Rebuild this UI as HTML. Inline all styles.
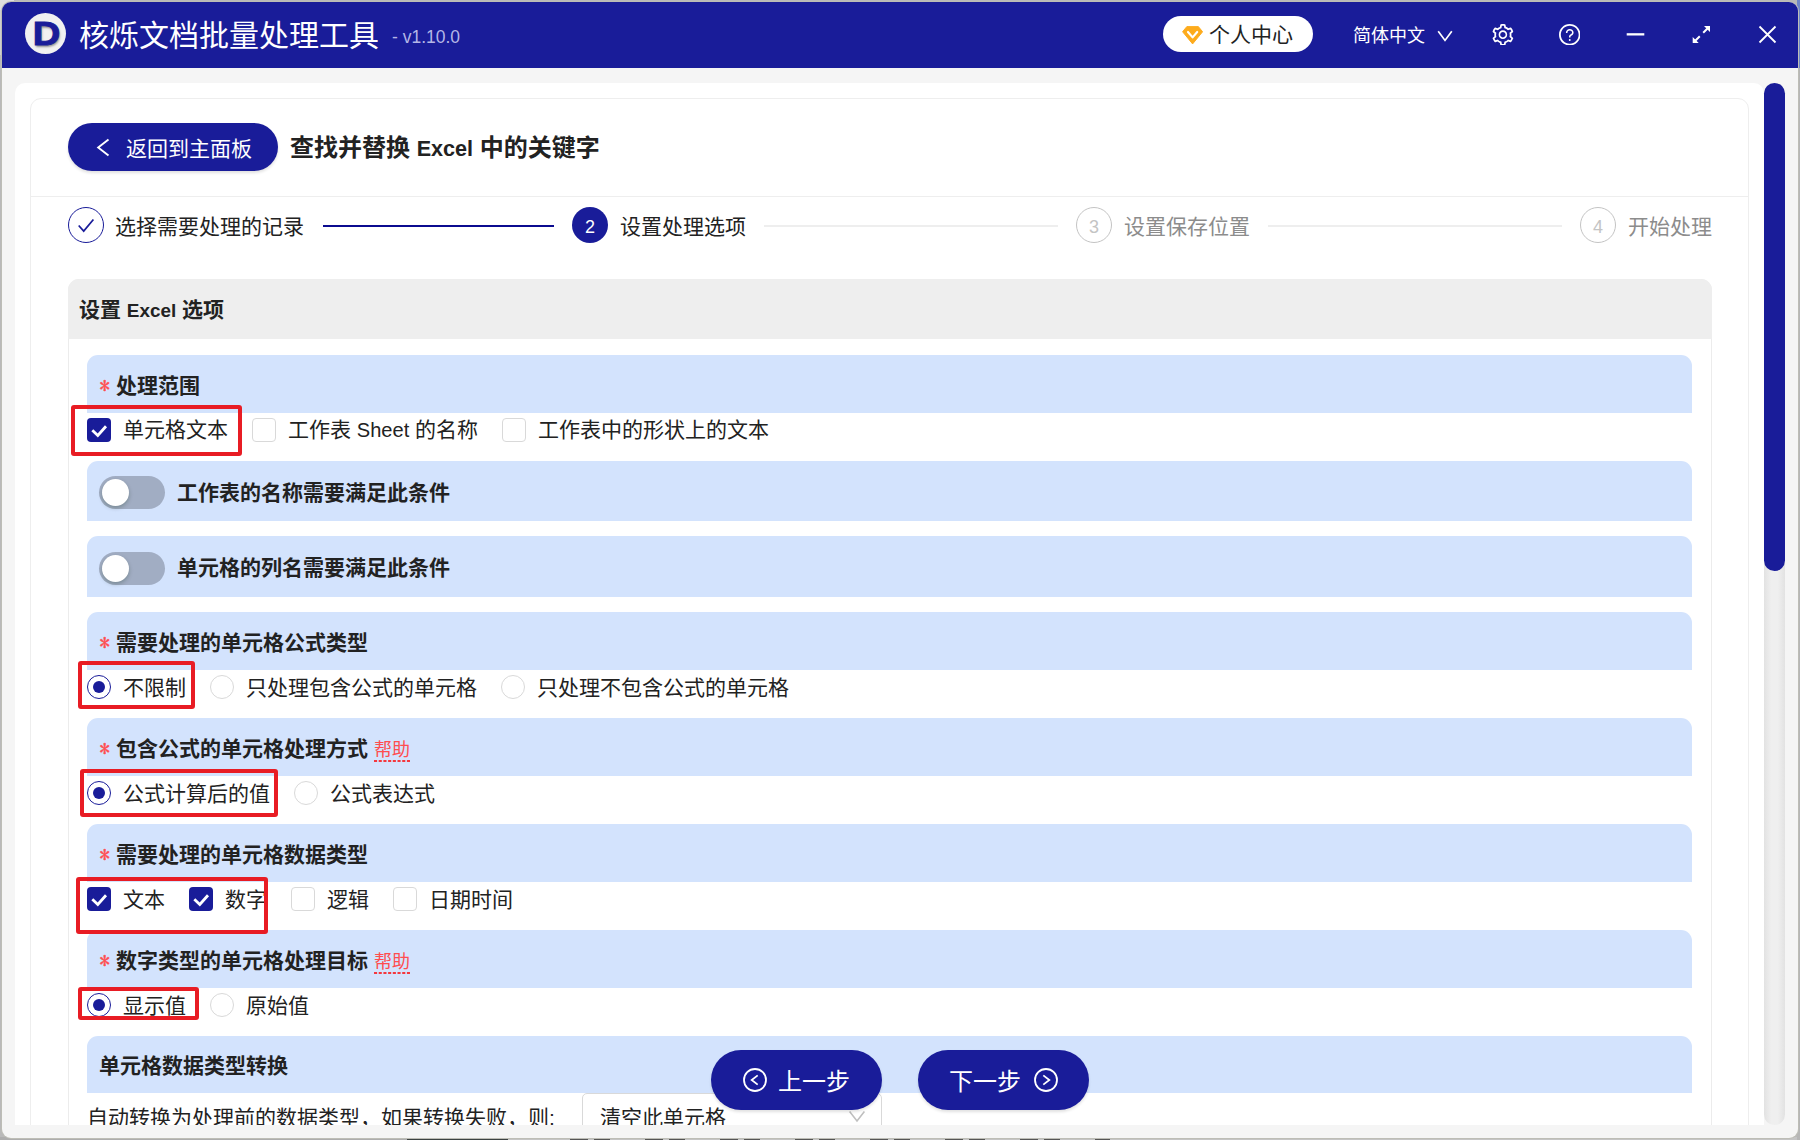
<!DOCTYPE html>
<html lang="zh-CN">
<head>
<meta charset="utf-8">
<title>核烁文档批量处理工具</title>
<style>
*{box-sizing:border-box;margin:0;padding:0}
html,body{width:1800px;height:1140px;overflow:hidden}
body{position:relative;background:#b9b9b9;font-family:"Liberation Sans","Noto Sans CJK SC",sans-serif;color:#222;font-size:21px}
.abs{position:absolute}
.t{position:absolute;white-space:nowrap;line-height:30px;height:30px}
.en{font-size:.9em}
.en2{font-size:.955em}
#win{position:absolute;left:2px;top:2px;width:1796px;height:1135.500px;background:#f5f5f5;border-radius:9px;overflow:hidden;box-shadow:0 0 0 1px #bdbdb6}
#bar{position:absolute;left:0;top:0;width:1796px;height:66px;background:#191c99}
.bb{position:absolute;left:87px;width:1605px;background:#d3e3fd;border-radius:11px 11px 0 0}
.lab{font-weight:bold;color:#222}
.star{position:absolute;color:#ff4d4f;font-size:21px;line-height:30px;font-family:"IPAGothic","DejaVu Sans",sans-serif;-webkit-text-stroke:.4px #ff4d4f}
.help{position:absolute;color:#ff4d4f;font-size:18px;line-height:24px;height:24px;white-space:nowrap}
.help svg{position:absolute;left:0;top:22.400px}
.cb{position:absolute;width:24px;height:24px;border:1px solid #d9d9d9;border-radius:4px;background:#fff}
.cb.on{border:0;background:#191c99}
.cb.on svg{position:absolute;left:0;top:0}
.rd{position:absolute;width:24px;height:24px;border:1px solid #d9d9d9;border-radius:50%;background:#fff}
.rd.on{border:1px solid #191c99}
.rd.on:after{content:"";position:absolute;left:50%;top:50%;width:12px;height:12px;margin:-6px 0 0 -6px;border-radius:50%;background:#191c99}
.red{position:absolute;border:4px solid #e81c24;border-radius:3px}
.sw{position:absolute;width:66px;height:33px;border-radius:17px;background:#a1adc3}
.sw:after{content:"";position:absolute;left:3px;top:3px;width:27px;height:27px;border-radius:50%;background:#fff;box-shadow:0 2px 4px rgba(0,35,11,.25)}
.btn{position:absolute;background:#191c99;color:#fff;border-radius:30px;box-shadow:0 2px 3px rgba(0,0,0,.12)}
</style>
</head>
<body>
<div id="desk">
<div class="abs" style="left:0;top:0;width:3px;height:55px;background:#cfcfcf"></div>
<div class="abs" style="left:0;top:0;width:14px;height:10px;background:#dedede"></div>
<div class="abs" style="left:0;top:1137px;width:407px;height:3px;background:#adadad"></div>
<div class="abs" style="left:407px;top:1137px;width:101px;height:3px;background:#3c4242"></div>
<div class="abs" style="left:508px;top:1137px;width:1292px;height:3px;background:#c4c4c4"></div>
<div class="abs" style="left:570px;top:1138px;width:540px;height:2px;background:repeating-linear-gradient(90deg,#555 0 18px,#c4c4c4 18px 24px,#555 24px 40px,#c4c4c4 40px 75px)"></div>
<div class="abs" style="left:1797px;top:0;width:3px;height:68px;background:#6f86c9"></div>
<div class="abs" style="left:1797px;top:68px;width:3px;height:1072px;background:#b6b6b6"></div>
</div>
<div id="win">
  <div id="bar"></div>
</div>
<div id="clip" class="abs" style="left:0;top:0;width:1800px;height:1125px;overflow:hidden">
  <div class="abs" style="left:15px;top:83px;width:1749px;height:1060px;background:#fff;border-radius:10px 10px 0 0"></div>
  <div class="abs" style="left:30px;top:98px;width:1719px;height:1100px;border:1px solid #eee;border-radius:11px"></div>
  <div class="abs" style="left:31px;top:196px;width:1717px;height:1px;background:#eee"></div>
  <!--HEADER-->
  <div class="btn" style="left:68px;top:123px;width:210px;height:48px;border-radius:24px"></div>
  <svg class="abs" style="left:95px;top:137px" width="16" height="21" viewBox="0 0 16 21"><path d="M13.500 2.600L3.200 10.500 13.500 18.400" fill="none" stroke="#fff" stroke-width="1.900"/></svg>
  <div class="t" style="left:126px;top:134px;font-size:21px;color:#fff">返回到主面板</div>
  <div class="t lab" style="left:290px;top:131px;height:34px;line-height:34px;font-size:24px">查找并替换 <span class="en">Excel</span> 中的关键字</div>
  <!--STEPS-->
  <div class="abs" style="left:68px;top:207px;width:36px;height:36px;border-radius:50%;border:1px solid #191c99;background:#fff"></div>
  <svg class="abs" style="left:76px;top:215px" width="20" height="20" viewBox="0 0 20 20"><path d="M2.700 10.500L7.700 16.100 17.400 4.500" fill="none" stroke="#191c99" stroke-width="1.700"/></svg>
  <div class="t" style="left:115px;top:212px;font-size:21px;color:#222">选择需要处理的记录</div>
  <div class="abs" style="left:323px;top:225px;width:231px;height:2px;background:#0b0b8f"></div>
  <div class="abs" style="left:572px;top:207px;width:36px;height:36px;border-radius:50%;background:#191c99;color:#fff;text-align:center;line-height:41px;font-size:18px;font-family:'Liberation Sans',sans-serif">2</div>
  <div class="t" style="left:620px;top:212px;font-size:21px;color:#222">设置处理选项</div>
  <div class="abs" style="left:764px;top:225px;width:294px;height:2px;background:#eee"></div>
  <div class="abs" style="left:1076px;top:207px;width:36px;height:36px;border-radius:50%;border:1px solid #c4c4c4;color:#c4c4c4;text-align:center;line-height:39px;font-size:18px;font-family:'Liberation Sans',sans-serif">3</div>
  <div class="t" style="left:1124px;top:212px;font-size:21px;color:#8c8c8c">设置保存位置</div>
  <div class="abs" style="left:1268px;top:225px;width:294px;height:2px;background:#eee"></div>
  <div class="abs" style="left:1580px;top:207px;width:36px;height:36px;border-radius:50%;border:1px solid #c4c4c4;color:#c4c4c4;text-align:center;line-height:39px;font-size:18px;font-family:'Liberation Sans',sans-serif">4</div>
  <div class="t" style="left:1628px;top:212px;font-size:21px;color:#8c8c8c">开始处理</div>
  <div class="abs" style="left:68px;top:279px;width:1644px;height:900px;border:1px solid #ececec;border-radius:11px 11px 0 0"></div>
  <div class="abs" style="left:68px;top:279px;width:1644px;height:60px;background:#eee;border-radius:11px 11px 0 0"></div>
  <div class="t lab" style="left:79px;top:295px;font-size:21px">设置 <span class="en">Excel</span> 选项</div>
  <!--FORM-->
  <div class="bb" style="top:355px;height:57.5px"></div>
  <div class="star" style="left:99.5px;top:371.5px">*</div>
  <div class="t lab" style="left:116px;top:371px">处理范围</div>
  <div class="cb on" style="left:87px;top:418px"><svg width="24" height="24" viewBox="0 0 24 24"><path d="M5.300 12.200L10.800 17.400 19 8.200" fill="none" stroke="#fff" stroke-width="2.800"/></svg></div>
  <div class="t" style="left:123px;top:415px">单元格文本</div>
  <div class="cb" style="left:252px;top:418px"></div>
  <div class="t" style="left:288px;top:415px">工作表 <span class="en2">Sheet</span> 的名称</div>
  <div class="cb" style="left:502px;top:418px"></div>
  <div class="t" style="left:538px;top:415px">工作表中的形状上的文本</div>
  <div class="bb" style="top:461px;height:60px"></div>
  <div class="sw" style="left:99px;top:476.0px"></div>
  <div class="t lab" style="left:177px;top:478px">工作表的名称需要满足此条件</div>
  <div class="bb" style="top:536px;height:60.5px"></div>
  <div class="sw" style="left:99px;top:551.5px"></div>
  <div class="t lab" style="left:177px;top:553px">单元格的列名需要满足此条件</div>
  <div class="bb" style="top:612px;height:57.5px"></div>
  <div class="star" style="left:99.5px;top:628.5px">*</div>
  <div class="t lab" style="left:116px;top:628px">需要处理的单元格公式类型</div>
  <div class="rd on" style="left:87px;top:675px"></div>
  <div class="t" style="left:123px;top:673px">不限制</div>
  <div class="rd" style="left:210px;top:675px"></div>
  <div class="t" style="left:246px;top:673px">只处理包含公式的单元格</div>
  <div class="rd" style="left:501px;top:675px"></div>
  <div class="t" style="left:537px;top:673px">只处理不包含公式的单元格</div>
  <div class="bb" style="top:718px;height:58px"></div>
  <div class="star" style="left:99.5px;top:734.5px">*</div>
  <div class="t lab" style="left:116px;top:734px">包含公式的单元格处理方式</div>
  <div class="help" style="left:374px;top:738px">帮助<svg width="36" height="3" viewBox="0 0 36 3"><path d="M0 1H36" stroke="#ff0000" stroke-width="1.300" stroke-dasharray="3.100 1.600" fill="none"/></svg></div>
  <div class="rd on" style="left:87px;top:781px"></div>
  <div class="t" style="left:123px;top:779px">公式计算后的值</div>
  <div class="rd" style="left:294px;top:781px"></div>
  <div class="t" style="left:330px;top:779px">公式表达式</div>
  <div class="bb" style="top:824px;height:58px"></div>
  <div class="star" style="left:99.5px;top:840.5px">*</div>
  <div class="t lab" style="left:116px;top:840px">需要处理的单元格数据类型</div>
  <div class="cb on" style="left:87px;top:887px"><svg width="24" height="24" viewBox="0 0 24 24"><path d="M5.300 12.200L10.800 17.400 19 8.200" fill="none" stroke="#fff" stroke-width="2.800"/></svg></div>
  <div class="t" style="left:123px;top:885px">文本</div>
  <div class="cb on" style="left:189px;top:887px"><svg width="24" height="24" viewBox="0 0 24 24"><path d="M5.300 12.200L10.800 17.400 19 8.200" fill="none" stroke="#fff" stroke-width="2.800"/></svg></div>
  <div class="t" style="left:225px;top:885px">数字</div>
  <div class="cb" style="left:291px;top:887px"></div>
  <div class="t" style="left:327px;top:885px">逻辑</div>
  <div class="cb" style="left:393px;top:887px"></div>
  <div class="t" style="left:429px;top:885px">日期时间</div>
  <div class="bb" style="top:930px;height:57.5px"></div>
  <div class="star" style="left:99.5px;top:946.5px">*</div>
  <div class="t lab" style="left:116px;top:946px">数字类型的单元格处理目标</div>
  <div class="help" style="left:374px;top:950px">帮助<svg width="36" height="3" viewBox="0 0 36 3"><path d="M0 1H36" stroke="#ff0000" stroke-width="1.300" stroke-dasharray="3.100 1.600" fill="none"/></svg></div>
  <div class="rd on" style="left:87px;top:993px"></div>
  <div class="t" style="left:123px;top:991px">显示值</div>
  <div class="rd" style="left:210px;top:993px"></div>
  <div class="t" style="left:246px;top:991px">原始值</div>
  <div class="bb" style="top:1036px;height:56.5px"></div>
  <div class="t lab" style="left:99px;top:1051px">单元格数据类型转换</div>
  <div class="t" style="left:87px;top:1103px">自动转换为处理前的数据类型，如果转换失败，则:</div>
  <div class="abs" style="left:582px;top:1093px;width:300px;height:48px;border:1px solid #d9d9d9;border-radius:5px;background:#fff"></div>
  <div class="t" style="left:600px;top:1103px">清空此单元格</div>
  <svg class="abs" style="left:848px;top:1110px" width="18" height="14" viewBox="0 0 18 14"><path d="M1.600 1.600L9 11 16.400 1.600" fill="none" stroke="#bfbfbf" stroke-width="1.600"/></svg>
  <div class="red" style="left:71px;top:405px;width:171px;height:51px"></div>
  <div class="red" style="left:78px;top:661px;width:117px;height:48px"></div>
  <div class="red" style="left:80px;top:769px;width:198px;height:48px"></div>
  <div class="red" style="left:76px;top:877px;width:192px;height:57px"></div>
  <div class="red" style="left:78px;top:987px;width:121px;height:33px"></div>
  <!--SCROLL-->
  <div class="abs" style="left:1764px;top:83px;width:21px;height:1042px;border-radius:10.500px;background:linear-gradient(90deg,#e2e2e2,#efefef 35%,#efefef 65%,#e2e2e2)"></div>
  <div class="abs" style="left:1764px;top:83px;width:21px;height:488px;border-radius:10.500px;background:#191c99"></div>
  <!--BUTTONS-->
  <div class="btn" style="left:711px;top:1050px;width:171px;height:60px"></div>
  <svg class="abs" style="left:742px;top:1067px" width="26" height="26" viewBox="0 0 26 26"><circle cx="13" cy="13" r="11" fill="none" stroke="#fff" stroke-width="1.800"/><path d="M15.700 8.400L9.700 13l6 4.600" fill="none" stroke="#fff" stroke-width="1.800"/></svg>
  <div class="t" style="left:778px;top:1065px;height:34px;line-height:34px;font-size:24px;color:#fff">上一步</div>
  <div class="btn" style="left:918px;top:1050px;width:171px;height:60px"></div>
  <div class="t" style="left:949px;top:1065px;height:34px;line-height:34px;font-size:24px;color:#fff">下一步</div>
  <svg class="abs" style="left:1033px;top:1067px" width="26" height="26" viewBox="0 0 26 26"><circle cx="13" cy="13" r="11" fill="none" stroke="#fff" stroke-width="1.800"/><path d="M10.300 8.400L16.300 13l-6 4.600" fill="none" stroke="#fff" stroke-width="1.800"/></svg>
</div>
<!--TITLEBAR-->
<div class="abs" style="left:25px;top:13px;width:41px;height:41px;border-radius:50%;background:#f1f1f1"></div>
<div class="abs" style="left:25px;top:13px;width:40px;height:40px;line-height:40px;text-align:center;font-family:'Liberation Sans',sans-serif;font-weight:bold;font-size:34px;color:#191c99;-webkit-text-stroke:1px #191c99;text-shadow:1px 2px 2px rgba(0,0,0,.4);transform:translate(1.500px,.200px) scaleX(1.120)">D</div>
<div class="t" style="left:79px;top:15px;height:42px;line-height:42px;font-size:30px;color:#fff">核烁文档批量处理工具</div>
<div class="t" style="left:392px;top:22px;font-size:17.5px;color:#b4b6e6;font-family:'Liberation Sans',sans-serif">- v1.10.0</div>
<div class="abs" style="left:1163px;top:16px;width:150px;height:36px;border-radius:18px;background:#fff"></div>
<svg class="abs" style="left:1181.700px;top:26.200px" width="21.200" height="18.300" viewBox="0 0 22 19"><path d="M5.2 0.4h11.6l4.6 5.6L11 18.6 0.6 6z" fill="#fdab1c" stroke="#fdab1c" stroke-width="1" stroke-linejoin="round"/><path d="M6.2 6.2l4.8 5.6 4.8-5.6" fill="none" stroke="#fff" stroke-width="2.2" stroke-linecap="round" stroke-linejoin="round"/></svg>
<div class="t" style="left:1209px;top:20px;font-size:21px;color:#222">个人中心</div>
<div class="t" style="left:1353px;top:21px;font-size:18px;color:#fff">简体中文</div>
<svg class="abs" style="left:1436px;top:29px" width="18" height="14" viewBox="0 0 18 14"><path d="M2.200 2.200L9 11.400 15.800 2.200" fill="none" stroke="#fff" stroke-width="1.700"/></svg>
<svg class="abs" style="left:1492.200px;top:23.600px" width="21.800" height="21.800" viewBox="64 64 896 896" fill="#fff"><path d="M924.8 625.7l-65.500-56c3.100-19 4.700-38.400 4.700-57.800s-1.600-38.800-4.700-57.800l65.500-56a32.030 32.030 0 0 0 9.300-35.200l-.9-2.600a442.300 442.300 0 0 0-79.700-137.900l-1.800-2.100a32.120 32.120 0 0 0-35.100-9.500l-81.300 28.900c-30-24.600-63.500-44-99.700-57.600l-15.700-85a32.050 32.050 0 0 0-25.800-25.700l-2.700-.5c-52.100-9.400-106.900-9.400-159 0l-2.700.5a32.050 32.050 0 0 0-25.800 25.700l-15.800 85.400a351.860 351.860 0 0 0-99 57.400l-81.900-29.100a32 32 0 0 0-35.100 9.500l-1.800 2.100a446.020 446.020 0 0 0-79.700 137.900l-.9 2.600c-4.500 12.500-.8 26.500 9.300 35.200l66.300 56.600c-3.100 18.800-4.600 38-4.600 57.100 0 19.200 1.500 38.400 4.600 57.100L99 625.500a32.030 32.030 0 0 0-9.300 35.200l.9 2.600c18.100 50.400 44.900 96.900 79.700 137.900l1.800 2.100a32.120 32.120 0 0 0 35.100 9.500l81.900-29.100c29.800 24.500 63.100 43.900 99 57.400l15.800 85.400a32.050 32.050 0 0 0 25.800 25.700l2.700.5a449.400 449.400 0 0 0 159 0l2.700-.5a32.050 32.050 0 0 0 25.800-25.700l15.700-85a350 350 0 0 0 99.700-57.600l81.300 28.900a32 32 0 0 0 35.100-9.500l1.800-2.100c34.800-41.100 61.600-87.500 79.700-137.900l.9-2.600c4.500-12.300.8-26.300-9.300-35zM788.300 465.900c2.500 15.100 3.800 30.600 3.800 46.100s-1.300 31-3.800 46.100l-6.600 40.100 74.700 63.900a370.030 370.030 0 0 1-42.600 73.600L721 702.800l-31.400 25.800c-23.900 19.600-50.500 35-79.300 45.800l-38.100 14.300-17.900 97a377.500 377.500 0 0 1-85 0l-17.900-97.200-37.800-14.500c-28.500-10.800-55-26.200-78.700-45.700l-31.400-25.900-93.400 33.200c-17-22.900-31.200-47.600-42.600-73.600l75.500-64.500-6.500-40c-2.400-14.900-3.700-30.300-3.700-45.500 0-15.300 1.200-30.600 3.700-45.500l6.500-40-75.500-64.500c11.300-26.100 25.600-50.700 42.600-73.600l93.400 33.200 31.400-25.900c23.700-19.500 50.200-34.900 78.700-45.700l37.900-14.300 17.900-97.200c28.100-3.200 56.800-3.200 85 0l17.900 97 38.100 14.300c28.700 10.800 55.400 26.200 79.300 45.800l31.400 25.800 92.800-32.900c17 22.900 31.200 47.600 42.600 73.600L781.800 426l6.500 39.900zM512 326c-97.200 0-176 78.800-176 176s78.800 176 176 176 176-78.800 176-176-78.800-176-176-176zm79.200 255.200A111.600 111.600 0 0 1 512 614c-29.900 0-58-11.700-79.200-32.800A111.600 111.600 0 0 1 400 502c0-29.900 11.700-58 32.800-79.200C454 401.600 482.100 390 512 390c29.900 0 58 11.600 79.200 32.800A111.600 111.600 0 0 1 624 502c0 29.900-11.700 58-32.800 79.200z"/></svg>
<svg class="abs" style="left:1558.600px;top:23.600px" width="21.500" height="21.500" viewBox="64 64 896 896" fill="#fff"><path d="M512 64C264.600 64 64 264.600 64 512s200.600 448 448 448 448-200.600 448-448S759.400 64 512 64zm0 820c-205.400 0-372-166.600-372-372s166.600-372 372-372 372 166.600 372 372-166.600 372-372 372z"/><path d="M623.600 316.700C593.600 290.400 554 276 512 276s-81.600 14.500-111.600 40.700C369.200 344 352 380.700 352 420v7.600c0 4.400 3.600 8 8 8h48c4.400 0 8-3.600 8-8V420c0-44.100 43.100-80 96-80s96 35.900 96 80c0 31.100-22 59.600-56.100 72.700-21.200 8.100-39.200 22.300-52.100 40.900-13.100 19-19.900 41.800-19.900 64.900V620c0 4.400 3.600 8 8 8h48c4.400 0 8-3.600 8-8v-22.700a48.300 48.300 0 0 1 30.900-44.800c59-22.700 97.100-74.700 97.100-132.500.1-39.300-17.100-76-48.300-103.300zM472 732a40 40 0 1 0 80 0 40 40 0 1 0-80 0z"/></svg>
<svg class="abs" style="left:1625px;top:30px" width="22" height="8" viewBox="0 0 22 8"><rect x="1.700" y="3.200" width="17.600" height="2.300" fill="#fff"/></svg>
<svg class="abs" style="left:1691px;top:24px" width="22" height="22" viewBox="0 0 22 22"><path d="M12.200 8.800L17 4M4 17L8.800 12.200" stroke="#fff" stroke-width="2" fill="none"/><path d="M13 2H19V8zM1.700 13V19H7.700z" fill="#fff"/></svg>
<svg class="abs" style="left:1757px;top:24px" width="22" height="22" viewBox="0 0 22 22"><path d="M2.500 2.500L18.500 18.500M18.500 2.500L2.500 18.500" stroke="#fff" stroke-width="1.800" fill="none"/></svg>
</body>
</html>
